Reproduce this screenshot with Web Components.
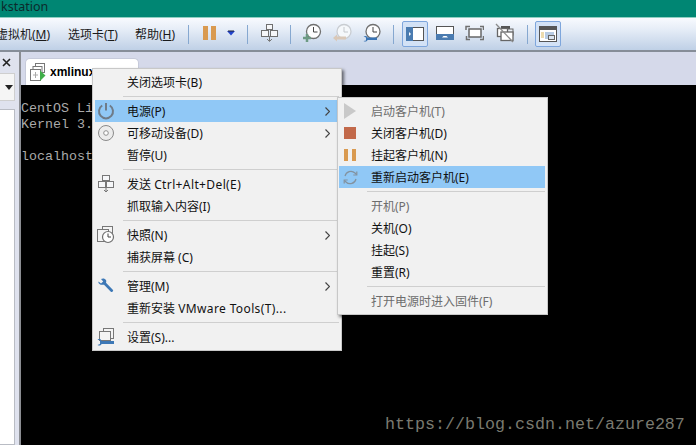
<!DOCTYPE html>
<html>
<head>
<meta charset="utf-8">
<style>
html, body { margin: 0; height: 100%; background: #000; overflow: hidden; }
body { font-family: "Noto Sans", "Noto Sans CJK SC", sans-serif; font-size: 12px; }
svg { display: block; flex: none; }
u { text-underline-offset: 1px; }
.wide { letter-spacing: .38px; }
</style>
</head>
<body>
<vm-app>
  <vm-title>kstation</vm-title>
  <vm-toolbar>
    <vm-menu-label style="margin-left:-4px;width:72px">虚拟机(<u>M</u>)</vm-menu-label>
    <vm-menu-label style="width:67px">选项卡(<u>T</u>)</vm-menu-label>
    <vm-menu-label style="width:53px">帮助(<u>H</u>)</vm-menu-label>
    <vm-tool-sep></vm-tool-sep>
    <svg style="margin-left:14px" width="44" height="34" viewBox="203 18 44 34">
      <rect x="203" y="27" width="5" height="14" fill="#d99a50"/><rect x="211" y="27" width="5" height="14" fill="#d99a50"/>
      <path d="M227 32h8l-4 4.500z" fill="#2244cc"/><path d="M228 32h6" stroke="#223" stroke-width="1"/>
    </svg>
    <vm-tool-sep></vm-tool-sep>
    <svg style="margin-left:13px" width="17" height="34" viewBox="261 18 17 34">
      <g fill="#f6f7f9" stroke="#6f6f6f"><rect x="266.500" y="25.500" width="6" height="5"/><rect x="261.500" y="31.500" width="7" height="6"/><rect x="270.500" y="31.500" width="7" height="6"/></g>
      <path d="M269.500 37v5M267 40l2.500 2.500L272 40" fill="none" stroke="#777"/>
    </svg>
    <vm-tool-sep style="margin-left:12px"></vm-tool-sep>
    <svg style="margin-left:11px" width="80" height="34" viewBox="302 18 80 34">
      <g fill="#fdfdfe" stroke="#707070" stroke-width="1.300"><circle cx="313.500" cy="32.500" r="7"/></g>
      <path d="M313.500 28v5h4" fill="none" stroke="#444"/>
      <path d="M303 39h8M307 35v8" stroke="#6d9a84" stroke-width="2.500"/>
      <circle cx="344" cy="32.500" r="7" fill="#f5f8fb" stroke="#c9cdd2" stroke-width="1.300"/>
      <path d="M344 28v5h4" fill="none" stroke="#c4c8cc"/>
      <path d="M333 39l4-3.500v2h9v3h-9v2z" fill="#d9c8b8"/>
      <circle cx="373" cy="32.500" r="7" fill="#fdfdfe" stroke="#707070" stroke-width="1.300"/>
      <path d="M373 28v5h4" fill="none" stroke="#444"/>
      <path d="M363.500 37.500c2-1 3.500-.5 4 1h9.500v2.500h-9.500c-.5 1.500-2 2-4 1l2.500-.5v-3z" fill="#3a74b4"/>
    </svg>
    <vm-tool-sep style="margin-left:11px"></vm-tool-sep>
    <vm-tool-btn active style="margin-left:8px">
      <svg width="18" height="14" viewBox="0 0 18 14"><rect width="18" height="14" fill="#fff"/><rect x=".5" y=".5" width="17" height="13" fill="none" stroke="#555"/><rect width="7" height="14" fill="#4a7bb0"/><path d="M3 5l2 2-2 2z" fill="#fff"/></svg>
    </vm-tool-btn>
    <svg style="margin-left:8px" width="18" height="34" viewBox="436 18 18 34">
      <rect x="436.500" y="27.500" width="17" height="13" fill="#fff" stroke="#555"/><rect x="436" y="35" width="18" height="6" fill="#4a7bb0"/><path d="M442 38.500h6l-1.500-1.500h-3z" fill="#fff"/>
    </svg>
    <svg style="margin-left:11px" width="19" height="34" viewBox="465 18 19 34">
      <rect x="469" y="30" width="12" height="8" fill="#fff" stroke="#666" stroke-width="1.500"/>
      <path d="M466 31v-3.500h4M480 27.500h3.500v3.500M483.500 37v3.500H480M470 40.500h-3.500V37" fill="none" stroke="#707070" stroke-width="1.500"/>
    </svg>
    <svg style="margin-left:11px" width="19" height="34" viewBox="495 18 19 34">
      <rect x="501" y="27" width="9" height="3" fill="#555"/><rect x="507" y="30" width="6" height="6" fill="#e8ecf3" stroke="#666"/>
      <rect x="497.500" y="29.500" width="10" height="8" fill="#fff" stroke="#666" stroke-width="1.300"/>
      <rect x="501" y="33" width="12" height="8.500" fill="#fff" stroke="#666" stroke-width="1.300"/>
      <path d="M496 25l17 18" stroke="#8c8c8c" stroke-width="1.300"/>
    </svg>
    <vm-tool-sep style="margin-left:13px"></vm-tool-sep>
    <vm-tool-btn active style="margin-left:7px">
      <svg width="18" height="16" viewBox="0 0 18 16"><rect x=".5" y=".5" width="17" height="15" fill="#fff" stroke="#555"/><rect width="18" height="4" fill="#555"/><path d="M2 7h3M2 9h3M2 11h3" stroke="#d9b75e"/><rect x="6" y="6" width="9" height="7" fill="#b7cbe4"/><rect x="9.500" y="9.500" width="6" height="4" fill="#dbe5f1" stroke="#666"/></svg>
    </vm-tool-btn>
  </vm-toolbar>
  <vm-workspace>
    <vm-side slot="side"></vm-side>
    <vm-tab slot="tabs">
      <svg slot="icon" width="16" height="19" viewBox="0 0 16 19">
        <g fill="#fff" stroke="#777"><rect x="5.500" y=".5" width="9" height="9"/><rect x="3" y="3.500" width="9" height="9"/><rect x=".5" y="6.500" width="10" height="11"/></g>
        <path d="M5.500 9v6M3 12h5" stroke="#aaa"/>
        <path d="M10 7.500l5.500 5-5.500 5.500z" fill="#3fae49"/>
      </svg>
      xmlinux
    </vm-tab>
    <vm-terminal slot="screen">CentOS Li
Kernel 3.

localhost</vm-terminal>
  </vm-workspace>
</vm-app>

<vm-menu style="left:92px;top:68px;width:250px;--pad-t:2px;--pad-l:2px;--pad-r:2px">
  <vm-item>关闭选项卡(B)</vm-item>
  <vm-sep></vm-sep>
  <vm-item active arrow>
    <svg slot="icon" width="18" height="18" viewBox="0 0 18 18"><path d="M5.200 3.500a7 7 0 1 0 7.600 0" fill="none" stroke="#6f7b88" stroke-width="2"/><path d="M9 1v7.500" stroke="#6f7b88" stroke-width="2"/></svg>
    电源(P)
  </vm-item>
  <vm-item arrow>
    <svg slot="icon" width="18" height="18" viewBox="0 0 18 18"><circle cx="9" cy="9" r="7.500" fill="#ececec" stroke="#8a8a8a"/><circle cx="9" cy="9" r="2.300" fill="#fff" stroke="#8f8f8f"/></svg>
    可移动设备(D)
  </vm-item>
  <vm-item>暂停(U)</vm-item>
  <vm-sep></vm-sep>
  <vm-item>
    <svg slot="icon" width="18" height="18" viewBox="0 0 18 18"><g fill="#f6f7f9" stroke="#777"><rect x="5.500" y=".5" width="7" height="5"/><rect x="1.500" y="6.500" width="7" height="6"/><rect x="9.500" y="6.500" width="7" height="6"/></g><path d="M9 12.500v4.500M7 15l2 2 2-2" fill="none" stroke="#777"/></svg>
    发送 <span class="wide">Ctrl+Alt+Del(E)</span>
  </vm-item>
  <vm-item>抓取输入内容(I)</vm-item>
  <vm-sep></vm-sep>
  <vm-item arrow>
    <svg slot="icon" width="18" height="18" viewBox="0 0 18 18"><g fill="#f4f4f4" stroke="#777"><rect x="5.500" y=".5" width="10" height="9"/><rect x=".5" y="3.500" width="11" height="12"/></g><circle cx="11" cy="11" r="5.500" fill="#fff" stroke="#6f6f6f" stroke-width="1.200"/><path d="M11 7.500V11h3" fill="none" stroke="#444"/></svg>
    快照(N)
  </vm-item>
  <vm-item>捕获屏幕 (C)</vm-item>
  <vm-sep></vm-sep>
  <vm-item arrow>
    <svg slot="icon" width="18" height="18" viewBox="0 0 18 18"><path d="M1.500 4.500L4 6.500l2.200-2L4 2c2-1.200 4-.5 5 1 .4 1 .3 2 0 2.800l7 7.200c.7 1-.8 2.600-1.900 1.900L7 7.700c-2 .5-6.300-.2-5.500-3.200z" fill="#3d78b6"/></svg>
    管理(M)
  </vm-item>
  <vm-item>重新安装 <span class="wide">VMware Tools(T)...</span></vm-item>
  <vm-sep></vm-sep>
  <vm-item>
    <svg slot="icon" width="18" height="18" viewBox="0 0 18 18"><g fill="#f4f4f4" stroke="#777"><rect x="6.500" y=".5" width="10" height="10"/><rect x="2.500" y="3.500" width="11" height="9"/></g><path d="M.5 11.500c2-1 3.500-.5 4 1.500H17v3H4.500c-.5 1.500-2 2-4 1l2.500-1v-3.500z" fill="#3d78b6"/></svg>
    设置(S)...
  </vm-item>
</vm-menu>

<vm-menu style="left:337px;top:97px;width:211px;--pad-t:2px;--pad-l:1px;--pad-r:2px">
  <vm-item disabled>
    <svg slot="icon" width="14" height="18" viewBox="0 0 14 18"><path d="M1 1l12 8-12 8z" fill="#c9c9c9"/></svg>
    启动客户机(T)
  </vm-item>
  <vm-item>
    <svg slot="icon" width="14" height="14" viewBox="0 0 14 14"><rect x="1" y="1" width="12" height="12" fill="#c2694a"/></svg>
    关闭客户机(D)
  </vm-item>
  <vm-item>
    <svg slot="icon" width="14" height="14" viewBox="0 0 14 14"><rect x="1" y="1" width="4" height="12" fill="#d99a50"/><rect x="9" y="1" width="4" height="12" fill="#d99a50"/></svg>
    挂起客户机(N)
  </vm-item>
  <vm-item active>
    <svg slot="icon" width="15" height="15" viewBox="0 0 15 15"><path d="M2 6a6 6 0 0 1 10-3l1.500 1.500M13 9a6 6 0 0 1-10 3L1.500 10.500" fill="none" stroke="#83929f" stroke-width="1.200"/><path d="M13.800 1.500v3.500h-3.500M1.200 13.500V10h3.500" fill="none" stroke="#83929f" stroke-width="1.200"/></svg>
    重新启动客户机(E)
  </vm-item>
  <vm-sep></vm-sep>
  <vm-item disabled>开机(P)</vm-item>
  <vm-item>关机(O)</vm-item>
  <vm-item>挂起(S)</vm-item>
  <vm-item>重置(R)</vm-item>
  <vm-sep></vm-sep>
  <vm-item disabled>打开电源时进入固件(F)</vm-item>
</vm-menu>

<vm-watermark>https://blog.csdn.net/azure287</vm-watermark>

<script>
// every element here is just a template plus a shadow root
class ShadowElement extends HTMLElement {
    constructor() {
        super();
        this.attachShadow({ mode: 'open' });
        const template = document.createElement('template');
        template.innerHTML = this.constructor.markup;
        this.shadowRoot.appendChild(template.content.cloneNode(true));
    }
}

class VmApp extends ShadowElement {
    static markup = `<style>
        :host { display: flex; flex-direction: column; width: 696px; height: 445px; overflow: hidden; }
    </style><slot></slot>`;
}

class VmTitle extends ShadowElement {
    static markup = `<style>
        :host { display: block; box-sizing: border-box; height: 18px; padding-left: 1px; background: #008673; border-bottom: 1px solid #8fcfc2;
            overflow: hidden; color: #0c2a2c; font: 12.500px/13px "Noto Sans", sans-serif; white-space: nowrap; flex: none; }
    </style><slot></slot>`;
}

class VmToolbar extends ShadowElement {
    static markup = `<style>
        :host { display: flex; align-items: center; box-sizing: border-box; height: 34px; flex: none; overflow: hidden;
            background: linear-gradient(#f8fafe, #e6edf7 35%, #bfd0e6);
            border-bottom: 2px solid #868d98; }
    </style><slot></slot>`;
}

class VmMenuLabel extends ShadowElement {
    static markup = `<style>
        :host { display: block; flex: none; font-size: 12px; color: #1a1a1a; white-space: nowrap; }
    </style><slot></slot>`;
}

class VmToolSep extends ShadowElement {
    static markup = `<style>
        :host { display: block; flex: none; width: 1px; height: 19px; background: #86a8d0; }
    </style>`;
}

class VmToolBtn extends ShadowElement {
    static markup = `<style>
        :host { display: flex; align-items: center; justify-content: center; flex: none; box-sizing: border-box;
            width: 26px; height: 26px; border-radius: 2px; }
        :host([active]) { background: #d3e2f6; border: 1px solid #7ea6dc; }
    </style><slot></slot>`;
}

class VmWorkspace extends ShadowElement {
    static markup = `<style>
        :host { display: grid; flex: 1; min-height: 0; grid-template-columns: 19px 2px 1fr; grid-template-rows: 33px 1fr;
            grid-template-areas: "side rule tabs" "side rule screen"; background: #d5d9ea; }
        .rule { grid-area: rule; background: #8b8d92; }
        ::slotted([slot=side]) { grid-area: side; }
        ::slotted([slot=tabs]) { grid-area: tabs; }
        ::slotted([slot=screen]) { grid-area: screen; }
    </style><slot name="side"></slot><div class="rule"></div><slot name="tabs"></slot><slot name="screen"></slot>`;
}

class VmSide extends ShadowElement {
    static markup = `<style>
        :host { display: flex; flex-direction: column; background: #dfe2ee; padding-top: 6px; overflow: hidden; }
        .x { height: 15px; padding-left: 2px; }
        .combo { display: flex; align-items: center; justify-content: flex-end; box-sizing: border-box; width: 15px; height: 28px;
            background: #f5f5f5; border: 1px solid #cfcfcf; border-left: 0; }
        .combo svg { margin-right: 1px; }
        .tree { flex: 1; width: 15px; margin-top: 8px; box-sizing: border-box; background: #fff; border: 1px solid #b9bcc4; border-left: 0; }
    </style>
    <div class="x"><svg width="9" height="9" viewBox="0 0 9 9" style="display:block"><path d="M1 1l7 7M8 1l-7 7" stroke="#222" stroke-width="1.600"/></svg></div>
    <div class="combo"><svg width="8" height="5" viewBox="0 0 8 5" style="display:block"><path d="M0 0h8l-4 5z" fill="#222"/></svg></div>
    <div class="tree"></div>`;
}

class VmTab extends ShadowElement {
    static markup = `<style>
        :host { display: flex; align-items: center; gap: 4px; box-sizing: border-box; width: 114px; height: 27px; margin: 6px 0 0 4px;
            padding: 0 4px; background: #fff; border: 1px solid #c6cada; border-bottom: 0; border-radius: 5px 5px 0 0;
            font: bold 12px "Liberation Sans", sans-serif; color: #000; }
        .close { margin-left: auto; margin-right: 3px; }
    </style><slot name="icon"></slot><slot></slot>
    <svg class="close" width="8" height="8" viewBox="0 0 8 8"><path d="M1 1l6 6M7 1L1 7" stroke="#999"/></svg>`;
}

class VmTerminal extends ShadowElement {
    static markup = `<style>
        :host { display: block; background: #000; color: #aaa; padding-top: 16px; overflow: hidden;
            font: 13.330px/16px "Liberation Mono", monospace; white-space: pre; }
    </style><slot></slot>`;
}

class VmMenu extends ShadowElement {
    static markup = `<style>
        :host { position: absolute; display: block; box-sizing: border-box;
            padding: var(--pad-t, 2px) var(--pad-r, 2px) 2px var(--pad-l, 2px);
            background: #f1f1f1; border: 1px solid #c8c8c8; box-shadow: 2px 2px 3px rgba(0,0,0,.55);
            font: 12px "Noto Sans", "Noto Sans CJK SC", sans-serif; color: #111; }
    </style><slot></slot>`;
}

class VmItem extends ShadowElement {
    static markup = `<style>
        :host { display: flex; align-items: center; height: 22px; white-space: nowrap; }
        :host([active]) { background: #90c8f6; }
        :host([disabled]) { color: #6d6d6d; }
        .icon { display: flex; align-items: center; justify-content: center; width: 22px; margin-right: 10px; flex: none; }
        .text { flex: 1; }
        .arrow { display: none; margin-right: 9px; }
        :host([arrow]) .arrow { display: block; }
    </style>
    <span class="icon"><slot name="icon"></slot></span>
    <span class="text"><slot></slot></span>
    <svg class="arrow" width="5" height="9" viewBox="0 0 5 9"><path d="M.5 .5l4 4-4 4" fill="none" stroke="#444" stroke-width="1.200"/></svg>`;
}

class VmSep extends ShadowElement {
    static markup = `<style>
        :host { display: block; box-sizing: border-box; height: 7px; padding-top: 3px; margin-left: 28px; }
        div { height: 1px; background: #cfcfcf; }
    </style><div></div>`;
}

class VmWatermark extends ShadowElement {
    static markup = `<style>
        :host { position: absolute; left: 385px; top: 415px; color: #7a7a70; font: 16.670px/20px "Liberation Mono", monospace; white-space: nowrap; }
    </style><slot></slot>`;
}

const elements = {
    'vm-app': VmApp, 'vm-title': VmTitle, 'vm-toolbar': VmToolbar, 'vm-menu-label': VmMenuLabel,
    'vm-tool-sep': VmToolSep, 'vm-tool-btn': VmToolBtn, 'vm-workspace': VmWorkspace, 'vm-side': VmSide,
    'vm-tab': VmTab, 'vm-terminal': VmTerminal, 'vm-menu': VmMenu, 'vm-item': VmItem, 'vm-sep': VmSep,
    'vm-watermark': VmWatermark,
};
Object.keys(elements).forEach(name => window.customElements.define(name, elements[name]));
</script>
</body>
</html>
